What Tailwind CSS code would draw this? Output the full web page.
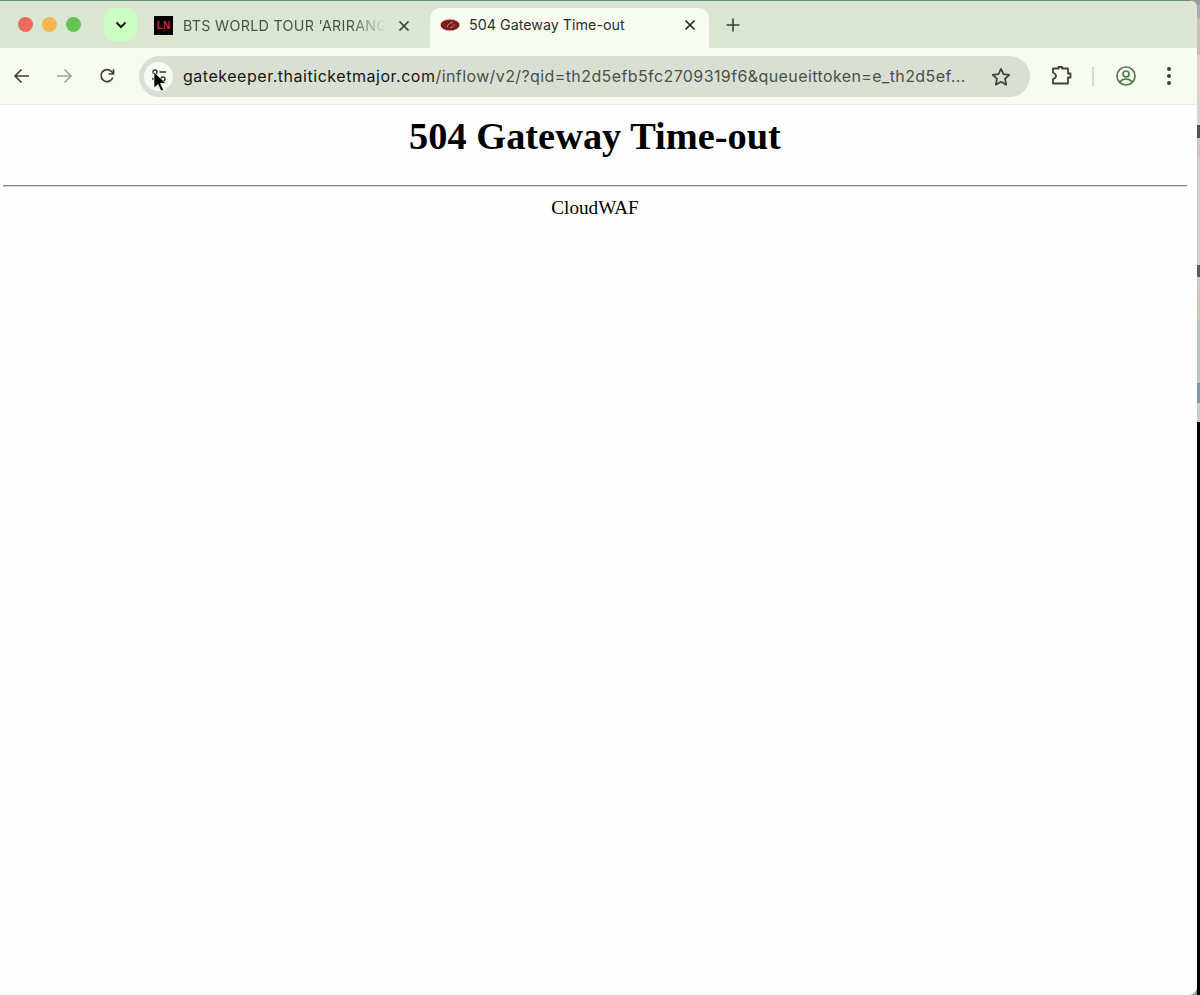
<!doctype html>
<html>
<head>
<meta charset="utf-8">
<script src="https://cdn.jsdelivr.net/npm/@tailwindcss/browser@4"></script>
<title>504 Gateway Time-out</title>
</head>
<body class="m-0 w-[1200px] h-[995px] overflow-hidden bg-white">
<div class="flex w-[1200px] h-[995px] bg-[#9a9a9a]">
  <div class="w-[1197px] h-[995px] flex flex-col bg-[#fefefe] rounded-br-[8px] rounded-tr-[8px] overflow-hidden">
    <div class="h-[1px] bg-[#6f8a80] shrink-0"></div>
    <!-- tab strip -->
    <div class="h-[47px] shrink-0 bg-[#dae6d2] flex items-start relative font-['Inter',sans-serif]">
      <div class="flex items-center gap-[9px] pl-[18px] pt-[16px]">
        <span class="w-[15px] h-[15px] rounded-full bg-[#ee6a5f]"></span>
        <span class="w-[15px] h-[15px] rounded-full bg-[#f5b64f]"></span>
        <span class="w-[15px] h-[15px] rounded-full bg-[#62c554]"></span>
      </div>
      <div class="ml-[23px] mt-[7px] w-[33px] h-[33px] rounded-[10px] bg-[#ccfdc2] flex items-center justify-center">
        <svg width="14" height="14" viewBox="0 0 14 14" fill="none" stroke="#111" stroke-width="2"><path d="M2.500 4.500 7 9l4.500-4.500"/></svg>
      </div>
      <div class="ml-[17px] mt-[8px] w-[270px] h-[33px] flex items-center">
        <div class="w-[19px] h-[19px] bg-black flex items-center justify-center text-[10px] leading-none font-bold text-[#d0263f] font-['Liberation_Sans',sans-serif] shrink-0">LN</div>
        <div class="ml-[10px] w-[204px] overflow-hidden text-[14.300px] tracking-[0.02em] text-[#4a5346] [mask-image:linear-gradient(to_right,black_82%,transparent_99%)]"><span class="inline-block whitespace-nowrap">BTS WORLD TOUR 'ARIRANG</span></div>
        <svg class="ml-[10px]" width="14" height="14" viewBox="0 0 14 14" fill="none" stroke="#3a4237" stroke-width="1.700"><path d="M2.500 2.500l9 9M11.500 2.500l-9 9"/></svg>
      </div>
      <div class="absolute left-[430px] top-[7px] w-[279px] h-[41px] bg-[#f7fbf2] rounded-t-[10px] flex items-center pb-[8px]">
        <svg class="ml-[10px]" width="20" height="14" viewBox="0 0 20 14"><ellipse cx="10" cy="7" rx="9.500" ry="5.500" fill="#7d1d20"/><ellipse cx="10" cy="7" rx="9.800" ry="6" fill="none" stroke="#cdb0ac" stroke-width="0.600"/><path d="M7 9c1-3 3-4.500 6-4.500M10 9.500c2 0 3.500-1 4.500-3" fill="none" stroke="#e08a8a" stroke-width="0.900"/></svg>
        <span class="ml-[9px] text-[14.300px] text-[#2c3329] whitespace-nowrap">504 Gateway Time-out</span>
        <svg class="ml-auto mr-[12px]" width="14" height="14" viewBox="0 0 14 14" fill="none" stroke="#20261e" stroke-width="1.700"><path d="M2.500 2.500l9 9M11.500 2.500l-9 9"/></svg>
      </div>
      <svg class="absolute left-[726px] top-[17px]" width="14" height="14" viewBox="0 0 14 14" fill="none" stroke="#3a4237" stroke-width="1.600"><path d="M7 .5v13M.5 7h13"/></svg>
    </div>
    <!-- toolbar -->
    <div class="h-[57px] shrink-0 bg-[#f7fbf2] border-b border-[#e6e9e2] flex items-center font-['Inter',sans-serif]">
      <div class="w-[139px] shrink-0 flex items-center pl-[13px] gap-[26px]">
        <svg width="17" height="16" viewBox="0 0 17 16" fill="none" stroke="#3b4338" stroke-width="1.700"><path d="M16 8H2M8.500 1.500 2 8l6.500 6.500"/></svg>
        <svg width="17" height="16" viewBox="0 0 17 16" fill="none" stroke="#9ea69a" stroke-width="1.700"><path d="M1 8h14M8.500 1.500 15 8l-6.500 6.500"/></svg>
        <svg width="16" height="16" viewBox="0 0 16 16" fill="none" stroke="#3b4338" stroke-width="1.700"><path d="M13.800 9.500A6 6 0 1 1 12.300 3.300L14.500 5.500"/><path d="M14.500 1.200v4.800H9.700" /></svg>
      </div>
      <div class="w-[891px] h-[41px] rounded-full bg-[#d9e0d3] flex items-center shrink-0 relative">
        <div class="ml-[5px] w-[29px] h-[29px] rounded-full bg-[#f7fbf2] flex items-center justify-center relative shrink-0">
          <svg width="16" height="16" viewBox="0 0 16 16" fill="none" stroke="#30372d" stroke-width="1.400"><circle cx="4" cy="4" r="2"/><path d="M8.500 4H15M1 11h7"/><circle cx="12" cy="11" r="2"/></svg>
          <svg class="absolute left-[9px] top-[9px]" width="15" height="22" viewBox="0 0 15 22"><path d="M1 1v16l4-3.500 3 6.500 2.500-1.200-3-6.300h5.500z" fill="#000" stroke="#fff" stroke-width="0.700"/></svg>
        </div>
        <div class="ml-[10px] text-[16px] whitespace-nowrap tracking-[0.025em] text-[#4a5048]"><span class="tracking-[0.033em] text-[#13170f]">gatekeeper.thaiticketmajor.com</span>/inflow/v2/?qid=th2d5efb5fc2709319f6&amp;queueittoken=e_th2d5ef...</div>
        <svg class="absolute right-[19px] top-[11px]" width="20" height="19" viewBox="0 0 20 19" fill="none" stroke="#3b4338" stroke-width="1.700" stroke-linejoin="round"><path d="M10 1.800l2.500 5.400 5.800.7-4.300 4 1.200 5.800-5.200-2.900-5.200 2.900 1.200-5.800-4.300-4 5.800-.7z"/></svg>
      </div>
      <svg class="ml-[21px]" width="22" height="22" viewBox="0 0 22 22" fill="none" stroke="#3b4338" stroke-width="1.800" stroke-linejoin="round"><path d="M2 3.500H7.500V2H11v1.500H17V8.500H19.500V12.500H17V18.500H2V14Q5 13 5 11T2 7.500Z"/></svg>
      <div class="ml-[19px] w-[2px] h-[19px] bg-[#bfe5b3]"></div>
      <svg class="ml-[22px]" width="20" height="20" viewBox="0 0 20 20" fill="none" stroke="#4f7a4c" stroke-width="1.700"><circle cx="10" cy="10" r="9"/><circle cx="10" cy="8" r="3"/><path d="M4 16c1.500-2.500 3.500-3 6-3s4.500.5 6 3"/></svg>
      <div class="ml-[31px] flex flex-col gap-[3px]">
        <span class="w-[4px] h-[4px] rounded-full bg-[#3b4338]"></span>
        <span class="w-[4px] h-[4px] rounded-full bg-[#3b4338]"></span>
        <span class="w-[4px] h-[4px] rounded-full bg-[#3b4338]"></span>
      </div>
    </div>
    <!-- page -->
    <div class="flex-1 font-['Liberation_Serif',serif] text-black pl-[3px] pr-[10px]">
      <h1 class="text-center text-[38.400px] leading-[44px] font-bold mt-[9px] mb-0">504 Gateway Time-out</h1>
      <hr class="mt-[27px] h-[2px] border-0 border-t border-b border-t-[#8a8a8a] border-b-[#d8d8d8]">
      <div class="text-center text-[19.200px] leading-[23px] mt-[9px]">CloudWAF</div>
    </div>
  </div>
  <!-- desktop sliver -->
  <div class="w-[3px] h-[995px] flex flex-col shrink-0">
    <div class="h-[5px] bg-[#9a9a9a]"></div>
    <div class="h-[13px] bg-[#a9acc0]"></div>
    <div class="h-[37px] bg-[#cbbdb4]"></div>
    <div class="h-[45px] bg-[#e0d3cf]"></div>
    <div class="h-[25px] bg-[#d6d2d0]"></div>
    <div class="h-[13px] bg-[#55504f]"></div>
    <div class="h-[19px] bg-[#d3c4bf]"></div>
    <div class="h-[108px] bg-[#d0d0d0]"></div>
    <div class="h-[12px] bg-[#5a5a5a]"></div>
    <div class="h-[13px] bg-[#cccccc]"></div>
    <div class="h-[27px] bg-[#d3c4b9]"></div>
    <div class="h-[66px] bg-[#b9c7c7]"></div>
    <div class="h-[20px] bg-[#7f97a8]"></div>
    <div class="h-[19px] bg-[#c5cfd3]"></div>
    <div class="flex-1 bg-black"></div>
  </div>
</div>
</body>
</html>
